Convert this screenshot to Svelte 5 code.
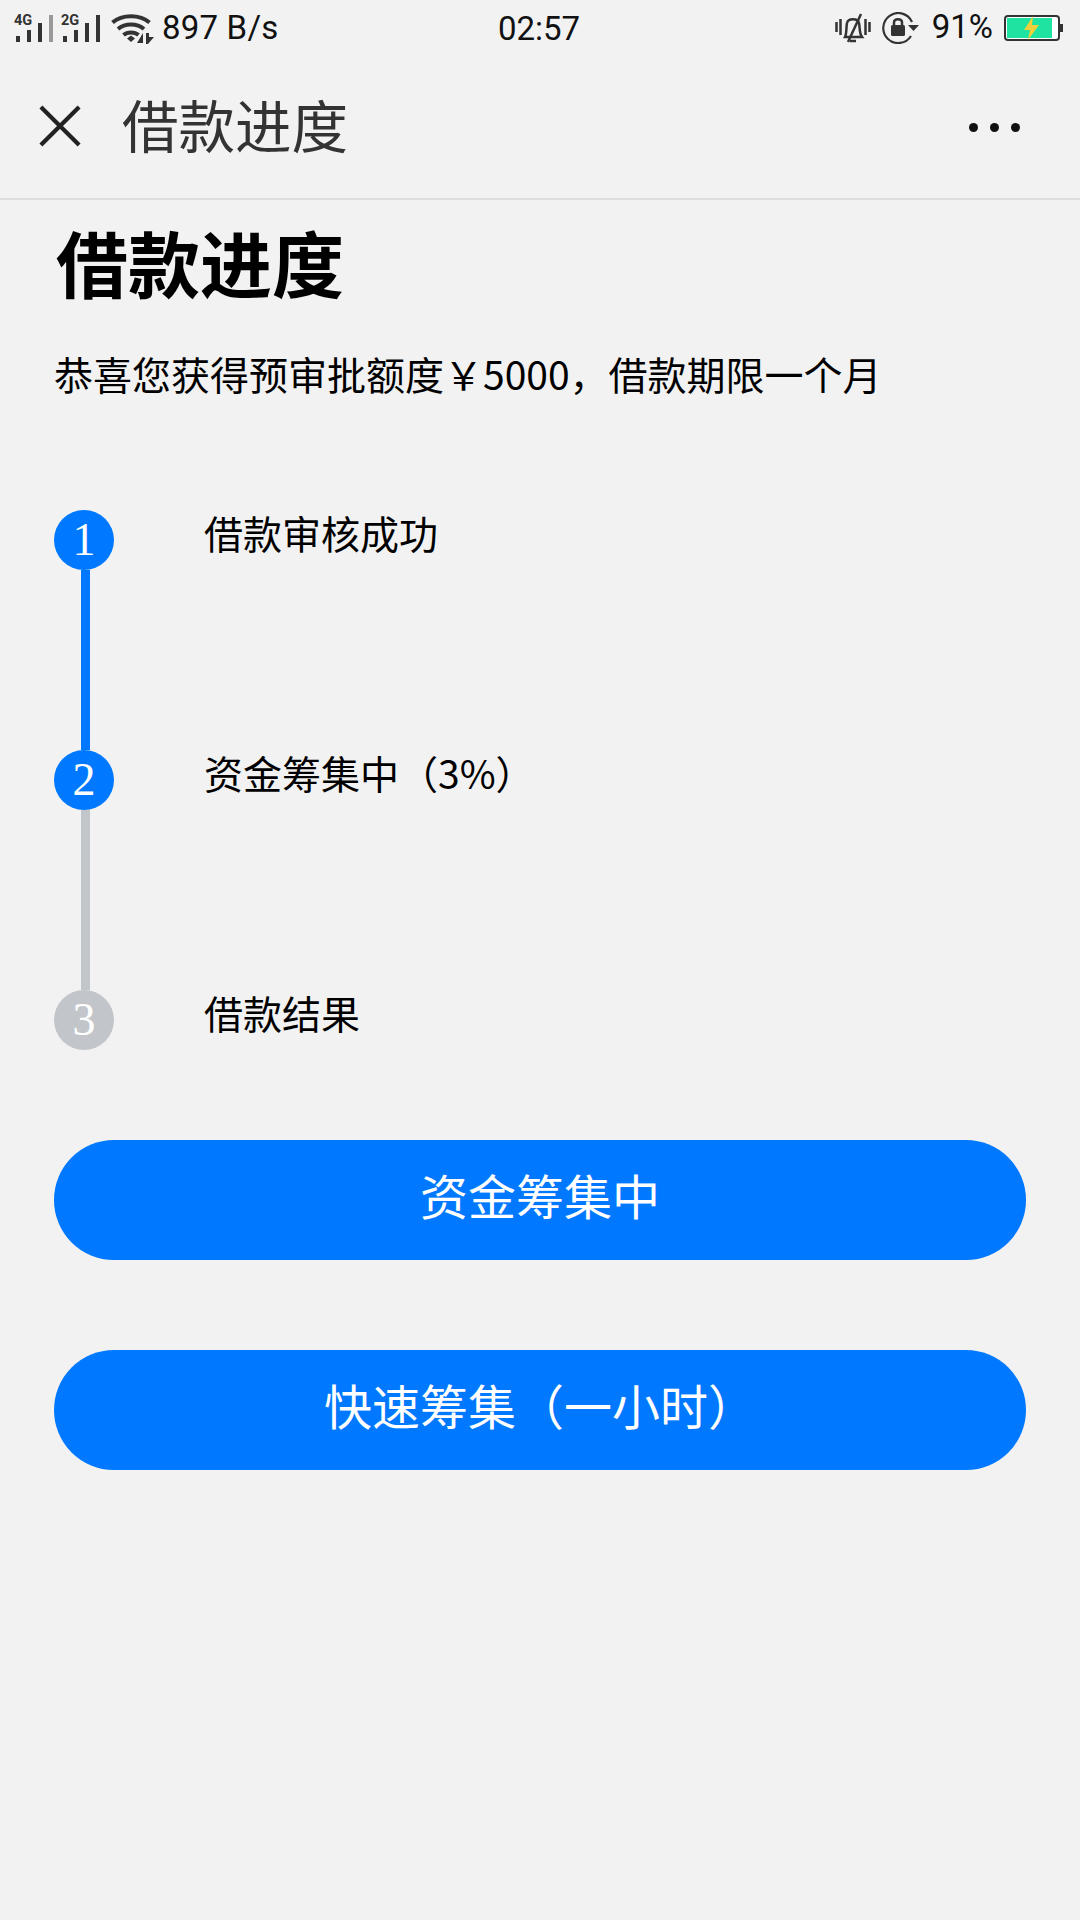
<script>
  const steps = [
    { n: 1, label: '借款审核成功', on: true, line: 'on' },
    { n: 2, label: '资金筹集中（3%）', on: true, line: 'off' },
    { n: 3, label: '借款结果', on: false, line: '' }
  ];
</script>

<div class="page">
  <header class="status">
    <div class="left">
      <svg class="sig" width="44" height="36" viewBox="0 -4 44 36">
        <text x="0" y="11" class="net">4G</text>
        <rect x="2" y="22" width="4" height="6" fill="#333"/>
        <rect x="13" y="16" width="4" height="12" fill="#333"/>
        <rect x="24" y="9" width="4" height="19" fill="#333"/>
        <rect x="35" y="1" width="4" height="27" fill="#999"/>
      </svg>
      <svg class="sig second" width="44" height="36" viewBox="0 -4 44 36">
        <text x="0" y="11" class="net">2G</text>
        <rect x="2" y="22" width="4" height="6" fill="#333"/>
        <rect x="13" y="16" width="4" height="12" fill="#333"/>
        <rect x="24" y="9" width="4" height="19" fill="#333"/>
        <rect x="35" y="1" width="4" height="27" fill="#333"/>
      </svg>
      <svg class="wifi" width="44" height="32" viewBox="0 0 44 32">
        <g fill="none" stroke="#333" stroke-width="4">
          <path d="M1.500 9.500C11 1 29 1 38.500 9.500"/>
          <path d="M7 16C14 10 26 10 33 16"/>
          <path d="M12.500 22C16.500 18.500 23.500 18.500 27.500 22"/>
        </g>
        <path d="M16 25.500L20 22.500L24 25.500L20 29Z" fill="#333"/>
        <path d="M32 20V30H26Z M35 20H38V24H43L37 31H35Z" fill="#333"/>
      </svg>
      <span class="stxt speed">897 B/s</span>
    </div>
    <span class="stxt clock">02:57</span>
    <div class="right">
      <svg class="bell" width="36" height="32" viewBox="0 0 36 32">
        <g fill="none" stroke="#333" stroke-width="2.500">
          <path d="M1.500 10V20M5.500 7V23M30.500 7V23M34.500 10V20"/>
          <path d="M10 25C12 21 11 15 12 11C13 6 23 6 24 11C25 15 24 21 27 25Z"/>
          <path d="M26 2L13 30"/>
          <path d="M15 29H21"/>
        </g>
      </svg>
      <svg class="lock" width="38" height="32" viewBox="0 0 38 32">
        <path d="M29 24A15 15 0 1 1 30 10" fill="none" stroke="#333" stroke-width="2.200"/>
        <path d="M26 13H37L31.500 19Z" fill="#333"/>
        <rect x="9" y="13" width="14" height="11" rx="1.500" fill="#333"/>
        <path d="M12 13V10.500C12 6 20 6 20 10.500V13" fill="none" stroke="#333" stroke-width="2.500"/>
      </svg>
      <span class="stxt pct">91%</span>
      <svg class="batt" width="60" height="26" viewBox="0 0 60 26">
        <rect x="1" y="1" width="54" height="24" rx="3" fill="#fff" stroke="#333" stroke-width="2"/>
        <rect x="3" y="3" width="45" height="20" fill="#1fe3a0"/>
        <rect x="56" y="9" width="3" height="8" fill="#333"/>
        <path d="M29 1L20 15H26L24 25L35 10H28Z" fill="#f0d13c"/>
      </svg>
    </div>
  </header>

  <nav class="bar">
    <svg class="close" width="42" height="42" viewBox="0 0 44 44">
      <path d="M2 2L42 42M42 2L2 42" fill="none" stroke="#222" stroke-width="4.400"/>
    </svg>
    <span class="bar-title">借款进度</span>
    <div class="dots"><i></i><i></i><i></i></div>
  </nav>

  <main class="content">
    <h1>借款进度</h1>
    <p class="sub">恭喜您获得预审批额度￥5000，借款期限一个月</p>

    <ol class="steps">
      {#each steps as s}
        <li class="step">
          <div class="rail">
            <span class="dot" class:on={s.on}>{s.n}</span>
            {#if s.line}<span class="line {s.line}"></span>{/if}
          </div>
          <span class="label">{s.label}</span>
        </li>
      {/each}
    </ol>

    <button class="btn first">资金筹集中</button>
    <button class="btn second-btn">快速筹集（一小时）</button>
  </main>
</div>

<style>
  :global(body) { margin: 0; background: #f2f2f2; }
  .page {
    width: 1080px; height: 1920px; background: #f2f2f2; overflow: hidden;
    font-family: "Noto Sans CJK SC", "Noto Sans", sans-serif; color: #000;
  }
  .status {
    height: 60px; display: grid; grid-template-columns: 1fr auto 1fr; align-items: center;
    padding: 0 16px 0 14px; box-sizing: border-box;
  }
  .left, .right { display: flex; align-items: center; }
  .right { justify-content: flex-end; }
  .stxt { font-family: Roboto, sans-serif; font-size: 33px; color: #111; line-height: 40px; }
  .net { font: 700 14.500px Roboto, sans-serif; fill: #333; }
  .sig { margin-top: -4px; }
  .sig.second { margin-left: 3px; }
  .wifi { margin-left: 6px; margin-top: -2px; }
  .speed { margin-left: 7px; margin-top: -4px; letter-spacing: 0.200px; }
  .clock { margin-top: -2px; }
  .right svg { margin-top: -4px; }
  .pct { margin-left: 12px; margin-right: 11px; margin-top: -6px; }
  .lock { margin-left: 11px; }
  .bar {
    height: 140px; display: flex; align-items: center; box-sizing: border-box;
    border-bottom: 2px solid #dedede; padding: 0 60px 8px 39px;
  }
  .bar-title { margin-left: 41px; margin-top: -4px; font-size: 56.500px; line-height: 70px; color: #333; flex: 1; }
  .close { margin-top: 2px; }
  .dots { display: flex; gap: 12px; margin-top: 4px; }
  .dots i { width: 9px; height: 9px; border-radius: 50%; background: #111; display: block; }
  .content { padding: 0 54px; }
  h1 { margin: 25px 0 0 2px; font-size: 72px; line-height: 72px; font-weight: 700; color: #000; }
  .sub { margin: 48px 0 0; font-size: 39px; line-height: 56px; color: #000; }
  .steps { list-style: none; margin: 109px 0 0; padding: 0; }
  .step { display: flex; height: 240px; }
  .step:last-child { height: 60px; }
  .rail { position: relative; width: 60px; flex: none; }
  .dot {
    display: flex; width: 60px; height: 60px; border-radius: 50%; background: #c2c6cb; color: #fff;
    align-items: center; justify-content: center; font: 46px/60px "Liberation Serif", serif;
  }
  .dot.on { background: #0078ff; }
  .line { display: block; width: 9px; height: 180px; margin-left: 27px; }
  .line.on { background: #0078ff; }
  .line.off { background: #c2c6cb; }
  .label { margin-left: 90px; font-size: 39px; line-height: 50px; color: #000; margin-top: -3px; }
  .btn {
    display: block; width: 972px; height: 120px; border: 0; border-radius: 60px; background: #0078ff;
    color: #fff; font-family: inherit; font-size: 48px; padding: 0 0 12px;
  }
  .first { margin-top: 90px; }
  .second-btn { margin-top: 90px; }
</style>
